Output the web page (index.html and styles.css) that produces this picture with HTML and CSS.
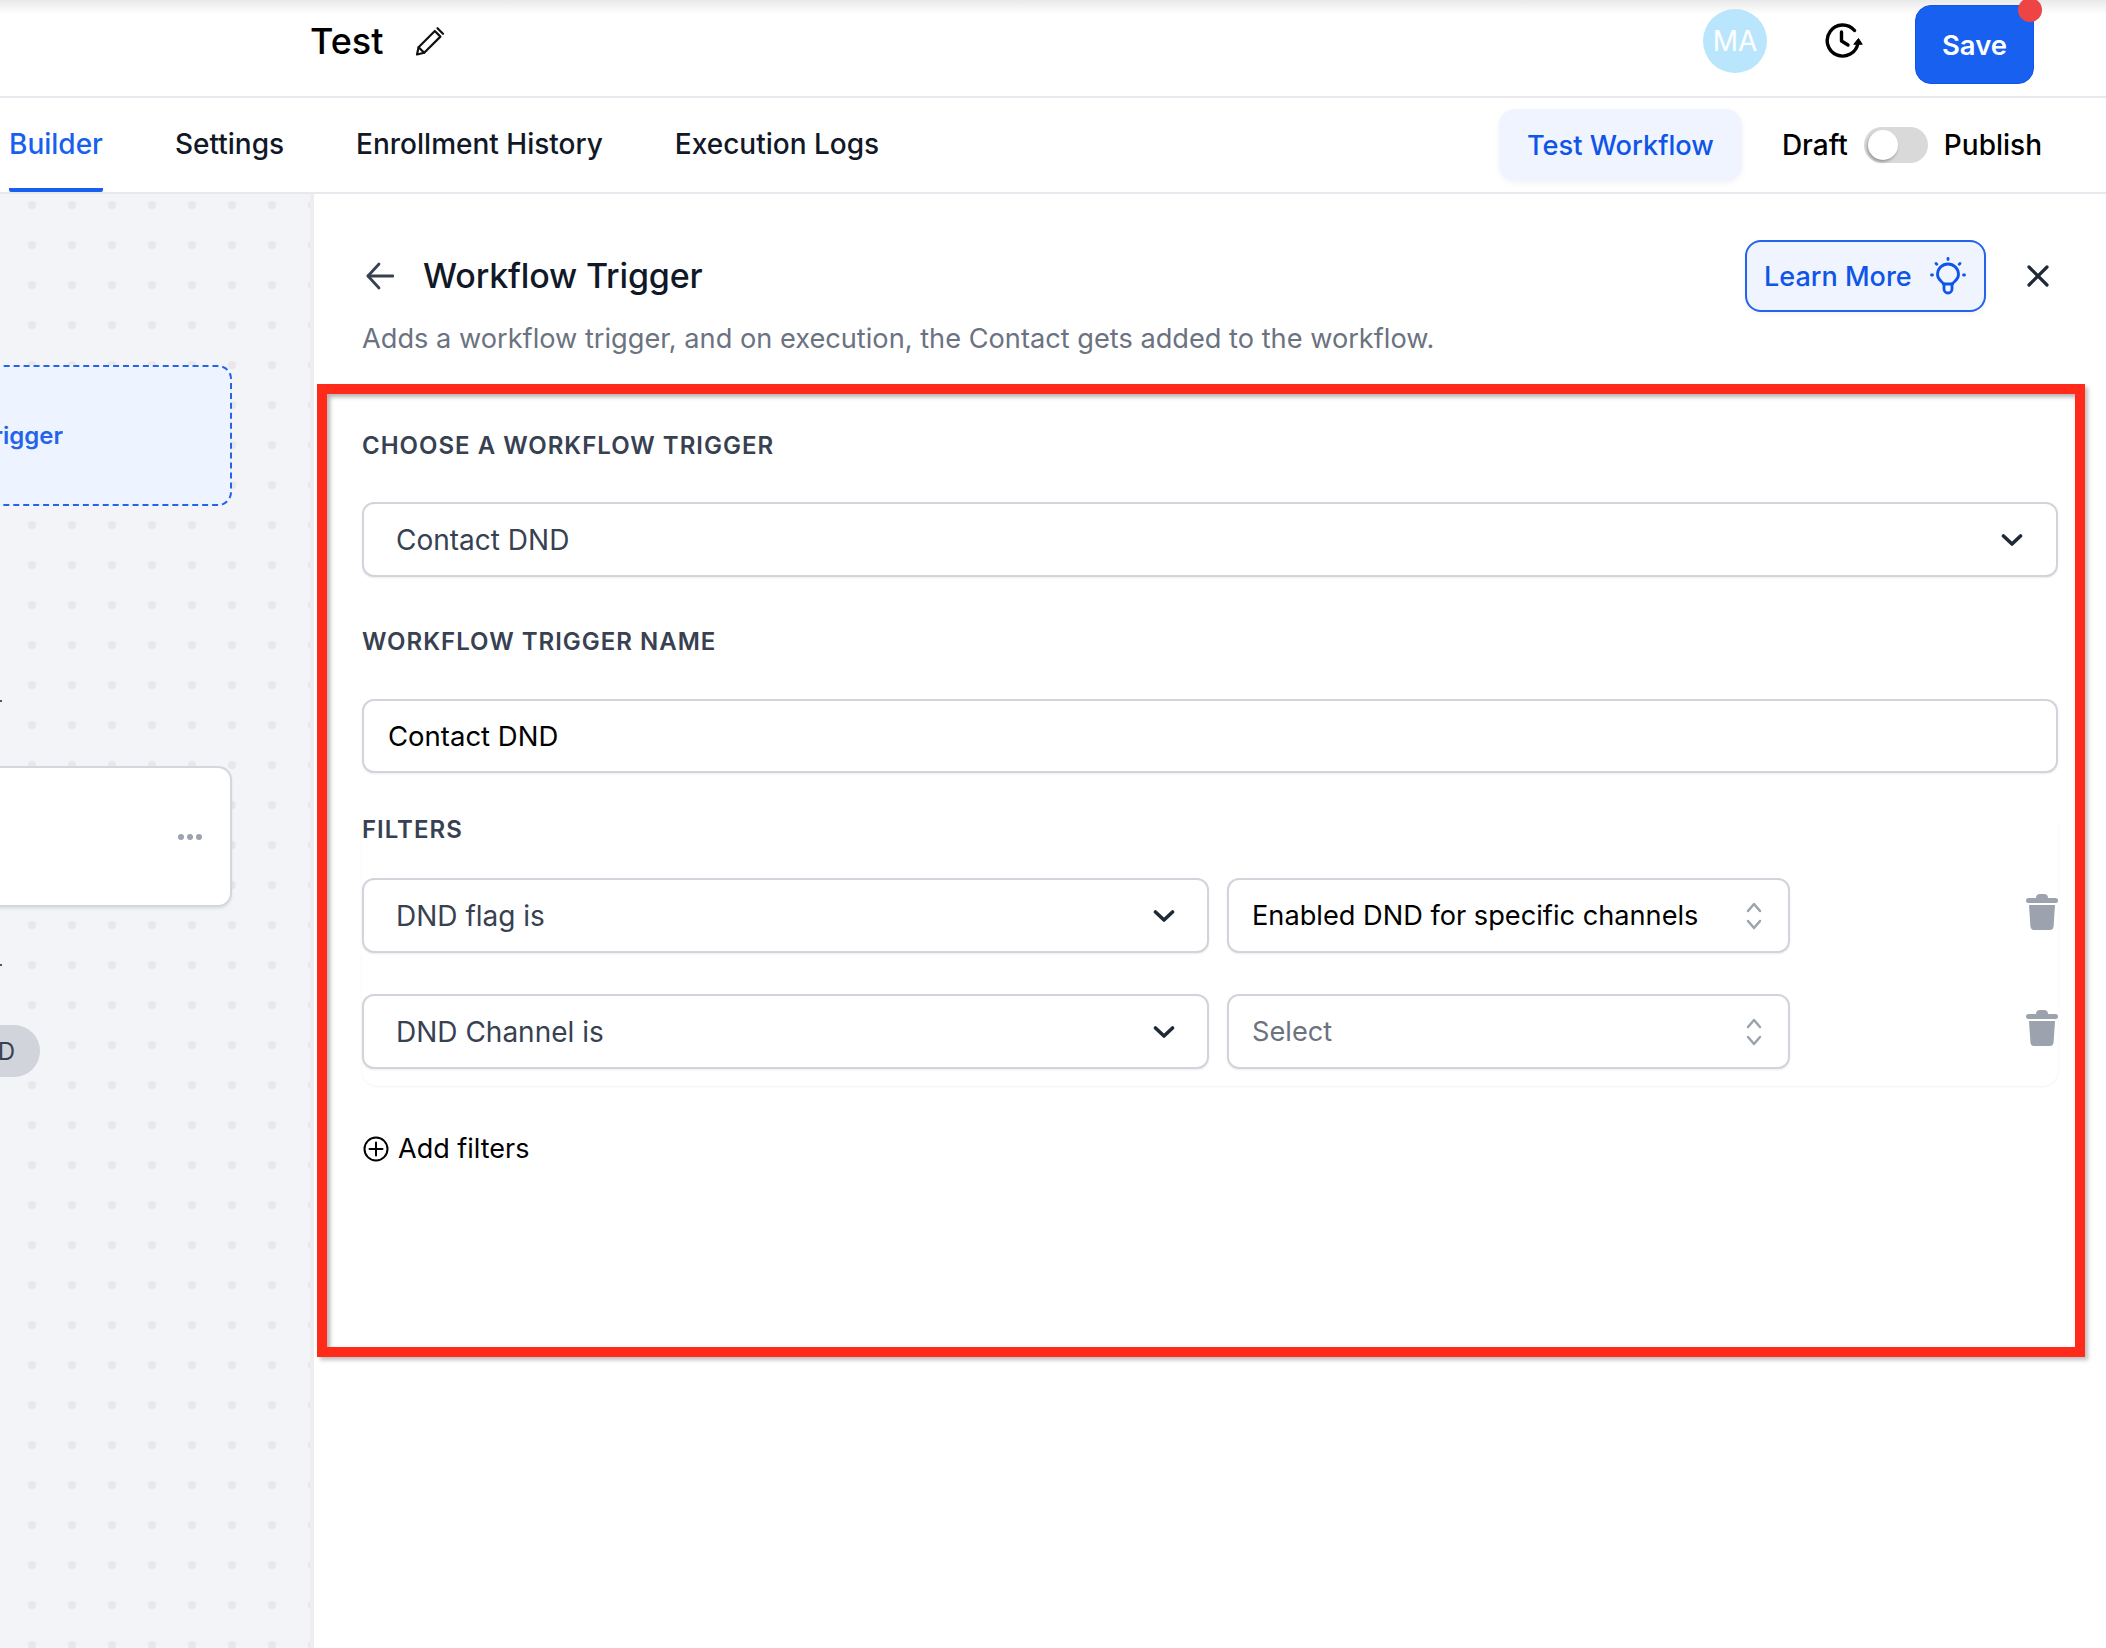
FILE: index.html
```html
<!DOCTYPE html>
<html lang="en">
<head>
<meta charset="utf-8">
<title>Workflow Trigger</title>
<link rel="stylesheet" href="styles.css">
</head>
<body>
<div class="app">
  <header class="topbar">
    <div class="title-wrap">
      <h1 class="wf-name">Test</h1>
      <svg class="pencil" viewBox="0 0 30 30" fill="none" stroke="#111" stroke-width="2.2" stroke-linejoin="round" stroke-linecap="round"><path d="M2 28.5 L3.6 21.2 L19.8 5 L25.4 10.6 L9.2 26.8 Z"/><path d="M3.6 21.2 L9.2 26.8"/><path d="M22.5 2.2 L28 7.8"/></svg>
    </div>
    <div class="top-actions">
      <div class="avatar">MA</div>
      <svg class="history" viewBox="0 0 38 36" fill="none" stroke="#000" stroke-width="3.4" stroke-linecap="round" stroke-linejoin="round"><path d="M29.500 7.500 A15.500 15.500 0 1 0 33 20"/><path d="M16.500 9 V18 L23 22"/><path d="M29 21 L33.500 15.500 L37 21 Z" fill="#000" stroke-width="1"/></svg>
      <button class="save">Save<span class="save-dot"></span></button>
    </div>
  </header>

  <nav class="tabs">
    <a class="tab active">Builder</a>
    <a class="tab">Settings</a>
    <a class="tab">Enrollment History</a>
    <a class="tab">Execution Logs</a>
    <div class="tab-actions">
      <button class="test-btn">Test Workflow</button>
      <span class="status draft">Draft</span>
      <span class="toggle"><span class="knob"></span></span>
      <span class="status">Publish</span>
    </div>
  </nav>

  <main class="main">
    <div class="canvas">
      <div class="node node-trigger"><span>Workflow Trigger</span></div>
      <div class="tick tick-a"></div>
      <div class="node node-action"><span class="more"><i></i><i></i><i></i></span></div>
      <div class="tick tick-b"></div>
      <div class="end-pill">END</div>
    </div>

    <section class="panel">
      <div class="panel-head">
        <svg class="back" viewBox="0 0 28 28" fill="none" stroke="#374151" stroke-width="2.800" stroke-linecap="round" stroke-linejoin="round"><path d="M13 2 L2 14 L13 26"/><path d="M2 14 H27"/></svg>
        <h2 class="panel-title">Workflow Trigger</h2>
        <button class="learn">Learn More
          <svg class="bulb" viewBox="0 0 36 38" fill="none" stroke="#0f55e8" stroke-width="2.800" stroke-linecap="round" stroke-linejoin="round"><path d="M18 1.500 V2.500"/><path d="M6 6.500 L6.800 7.300"/><path d="M30 6.500 L29.200 7.300"/><path d="M1.500 18 H2.500"/><path d="M33.500 18 H34.500"/><path d="M13.500 27 C12 24 7.500 23 7.500 17.500 A10.500 10.500 0 0 1 28.500 17.500 C28.500 23 24 24 22.500 27 Z"/><path d="M14 27 V32 A4 4 0 0 0 22 32 V27"/></svg>
        </button>
        <svg class="close" viewBox="0 0 22 22" fill="none" stroke="#1f2937" stroke-width="3.200" stroke-linecap="round"><path d="M2 2 L20 20"/><path d="M20 2 L2 20"/></svg>
      </div>
      <p class="panel-desc">Adds a workflow trigger, and on execution, the Contact gets added to the workflow.</p>

      <div class="form">
        <label class="label label-first">Choose a workflow trigger</label>
        <div class="field select tall wide">
          <span>Contact DND</span>
          <svg class="chev" viewBox="0 0 22 14" fill="none" stroke="#1f2937" stroke-width="3.600" stroke-linecap="round" stroke-linejoin="round"><path d="M2.500 3 L11 11 L19.500 3"/></svg>
        </div>

        <label class="label">Workflow trigger name</label>
        <div class="field input">Contact DND</div>

        <div class="filters">
          <label class="label label-filters">Filters</label>
          <div class="filter-row">
            <div class="field select left tall">
              <span>DND flag is</span>
              <svg class="chev" viewBox="0 0 22 14" fill="none" stroke="#1f2937" stroke-width="3.600" stroke-linecap="round" stroke-linejoin="round"><path d="M2.500 3 L11 11 L19.500 3"/></svg>
            </div>
            <div class="field updown tall">
              <span>Enabled DND for specific channels</span>
              <svg class="ud" viewBox="0 0 18 30" fill="none" stroke="#9ca3af" stroke-width="2.500" stroke-linecap="round" stroke-linejoin="round"><path d="M3 10 L9 3 L15 10"/><path d="M3 20 L9 27 L15 20"/></svg>
            </div>
            <svg class="trash" viewBox="0 0 32 37" fill="#9ca3af"><rect x="0" y="5" width="32" height="5" rx="2.500"/><path d="M10 5 Q10 1 14 1 H18 Q22 1 22 5 Z"/><path d="M3 12 H29 L27.600 33 Q27.300 37 24 37 H8 Q4.700 37 4.400 33 Z"/></svg>
          </div>
          <div class="filter-row">
            <div class="field select left tall">
              <span>DND Channel is</span>
              <svg class="chev" viewBox="0 0 22 14" fill="none" stroke="#1f2937" stroke-width="3.600" stroke-linecap="round" stroke-linejoin="round"><path d="M2.500 3 L11 11 L19.500 3"/></svg>
            </div>
            <div class="field updown placeholder tall">
              <span>Select</span>
              <svg class="ud" viewBox="0 0 18 30" fill="none" stroke="#9ca3af" stroke-width="2.500" stroke-linecap="round" stroke-linejoin="round"><path d="M3 10 L9 3 L15 10"/><path d="M3 20 L9 27 L15 20"/></svg>
            </div>
            <svg class="trash" viewBox="0 0 32 37" fill="#9ca3af"><rect x="0" y="5" width="32" height="5" rx="2.500"/><path d="M10 5 Q10 1 14 1 H18 Q22 1 22 5 Z"/><path d="M3 12 H29 L27.600 33 Q27.300 37 24 37 H8 Q4.700 37 4.400 33 Z"/></svg>
          </div>
        </div>

        <div class="add-filters">
          <svg class="plus" viewBox="0 0 26 26" fill="none" stroke="#000" stroke-width="2" stroke-linecap="round"><circle cx="13" cy="13" r="11.500"/><path d="M13 6.500 V19.500"/><path d="M6.500 13 H19.500"/></svg>
          <span>Add filters</span>
        </div>
      </div>
      <div class="highlight"></div>
    </section>
  </main>
</div>
</body>
</html>
```
FILE: styles.css
```css
* { box-sizing: border-box; }
html, body { margin: 0; padding: 0; background: #fff; }
body { font-family: Inter, "Noto Sans", sans-serif; color: #000; }
h1, h2, p { margin: 0; font-weight: 500; }
button { font-family: inherit; cursor: pointer; }

.app { display: flex; flex-direction: column; width: 2106px; height: 1648px; overflow: hidden; }

/* top bar */
.topbar {
  flex: none; position: relative; display: flex; align-items: center; height: 98px;
  border-bottom: 2px solid #e8e8ee; padding-left: 310px; padding-right: 72px;
  background: linear-gradient(#e9e9e9, #fff 14px);
}
.title-wrap { display: flex; align-items: center; margin-top: -14px; }
.wf-name { font-size: 36px; line-height: 44px; color: #000; }
.pencil { width: 30px; height: 30px; margin-left: 32px; }
.top-actions { margin-left: auto; display: flex; align-items: center; }
.avatar {
  width: 64px; height: 64px; border-radius: 50%; background: #bae6fd; color: #fff;
  display: flex; align-items: center; justify-content: center; font-size: 28px; margin-top: -14px;
}
.history { width: 38px; height: 36px; margin-left: 58px; margin-top: -14px; }
.save {
  position: relative; width: 119px; height: 79px; margin-left: 52px; margin-top: -7px;
  background: #1760f0; border: 1px solid #0f55e8; border-radius: 16px; color: #fff;
  font-size: 27.5px; font-weight: 600; padding: 0;
}
.save-dot { position: absolute; top: -8px; right: -9px; width: 24px; height: 24px; border-radius: 50%; background: #ef4444; }

/* tabs */
.tabs { flex: none; display: flex; align-items: stretch; height: 96px; border-bottom: 2px solid #e8e8ee; padding-left: 9px; padding-right: 64px; gap: 72px; }
.tab { display: flex; align-items: center; font-size: 28px; font-weight: 500; color: #111827; border-bottom: 4px solid transparent; padding-top: 2px; }
.tab.active { color: #1760f0; border-bottom-color: #1760f0; border-radius: 0 0 2px 2px; }
.tab-actions { margin-left: auto; display: flex; align-items: center; }
.test-btn {
  width: 243px; height: 72px; background: #f0f4fe; color: #0f55e8; border: 0; border-radius: 16px;
  font-size: 27.2px; font-weight: 500; padding: 0; box-shadow: 0 2px 6px rgba(0,0,0,.05); margin-right: 40px;
}
.status { font-size: 28px; font-weight: 500; color: #000; }
.toggle { position: relative; width: 64px; height: 36px; border-radius: 18px; background: #d9d9d9; margin: 0 16px; }
.knob { position: absolute; left: 4px; top: 3px; width: 30px; height: 30px; border-radius: 50%; background: #fff; box-shadow: -1px 2px 3px rgba(0,0,0,.3); }

/* main */
.main { flex: 1; display: flex; min-height: 0; }
.canvas {
  flex: none; position: relative; width: 314px; overflow: hidden; border-right: 4px solid #eeeef0;
  background-color: #f3f4f8;
  background-image: radial-gradient(circle, #e8e8ea 4px, transparent 4.500px);
  background-size: 40px 40px; background-position: 12px 31px;
}
.node { position: absolute; left: -60px; width: 292px; height: 141px; border-radius: 14px; display: flex; align-items: center; justify-content: flex-end; }
.node-trigger { top: 171px; background: #edf4ff; border: 2px dashed #2563eb; padding-right: 167px; color: #2563eb; font-size: 24px; font-weight: 600; white-space: nowrap; padding-bottom: 1px; }
.node-action { top: 572px; background: #fff; border: 2px solid #d5d7de; box-shadow: 0 2px 3px rgba(0,0,0,.08); padding-right: 28px; }
.more { display: flex; gap: 3px; }
.more i { width: 6px; height: 6px; border-radius: 50%; background: #9ca3af; }
.tick { position: absolute; left: 0; width: 2px; height: 2px; background: #4b5563; }
.tick-a { top: 506px; }
.tick-b { top: 770px; }
.end-pill { position: absolute; top: 831px; left: -60px; width: 100px; height: 52px; border-radius: 26px; background: #d1d5db; color: #374151; font-size: 24px; display: flex; align-items: center; justify-content: flex-end; padding-right: 25px; }

/* panel */
.panel { position: relative; flex: 1; padding: 46px 48px 0 48px; background: #fff; }
.panel-head { display: flex; align-items: center; height: 72px; padding-left: 4px; padding-right: 9px; }
.back { width: 28px; height: 28px; }
.panel-title { font-size: 34px; line-height: 44px; letter-spacing: -.15px; color: #111827; margin-left: 29px; }
.learn {
  margin-left: auto; display: flex; align-items: center; width: 241px; height: 72px; padding: 0 0 0 17px;
  background: #eff4ff; border: 2px solid #2563eb; border-radius: 16px; color: #0f55e8; font-size: 27px; font-weight: 500;
  box-shadow: 0 2px 4px rgba(0,0,0,.05);
}
.bulb { width: 36px; height: 38px; margin-left: 18px; }
.close { width: 22px; height: 22px; margin-left: 41px; }
.panel-desc { font-size: 27.2px; line-height: 40px; color: #6b7280; font-weight: 400; margin-top: 7px; }

.form { display: flex; flex-direction: column; }
.label { display: block; font-size: 24px; line-height: 34px; font-weight: 600; letter-spacing: 1px; color: #374151; text-transform: uppercase; margin: 48px 0 40px; }
.label-first { margin-top: 70px; margin-bottom: 39px; }
.label-filters { margin: 0 0 31px; }
.field { display: flex; align-items: center; height: 74px; border: 2px solid #d1d5db; border-radius: 12px; background: #fff; font-size: 28px; box-shadow: 0 1px 2px rgba(0,0,0,.08); }
.tall { height: 75px; }
.select { justify-content: space-between; color: #374151; padding: 0 31px 0 32px; }
.wide { padding-right: 33px; }
.input { color: #000; padding-left: 24px; font-size: 27.5px; }
.chev { width: 22px; height: 14px; }
.filters { margin-top: 40px; padding-bottom: 17px; border-radius: 16px; box-shadow: 0 1px 3px rgba(0,0,0,.05); }
.filter-row { display: flex; align-items: flex-start; margin-bottom: 41px; }
.filter-row:last-child { margin-bottom: 0; }
.left { width: 847px; padding-right: 32px; }
.updown { width: 563px; margin-left: 18px; padding: 0 25px 0 23px; justify-content: space-between; color: #000; font-size: 27.2px; }
.placeholder { color: #6b7280; }
.ud { width: 18px; height: 30px; }
.trash { width: 32px; height: 37px; margin-left: auto; margin-top: 15px; }
.add-filters { display: flex; align-items: center; height: 36px; margin-top: 44px; font-size: 27px; color: #000; }
.plus { width: 26px; height: 26px; margin-left: 1px; margin-right: 9px; margin-top: 2px; }

/* annotation frame drawn over the form */
.highlight {
  position: absolute; left: 3px; top: 190px; width: 1768px; height: 973px;
  border: 10px solid #ff2a1a; pointer-events: none;
  box-shadow: 3px 3px 4px rgba(0,0,0,.25), inset 3px 3px 4px rgba(0,0,0,.3);
}
```
